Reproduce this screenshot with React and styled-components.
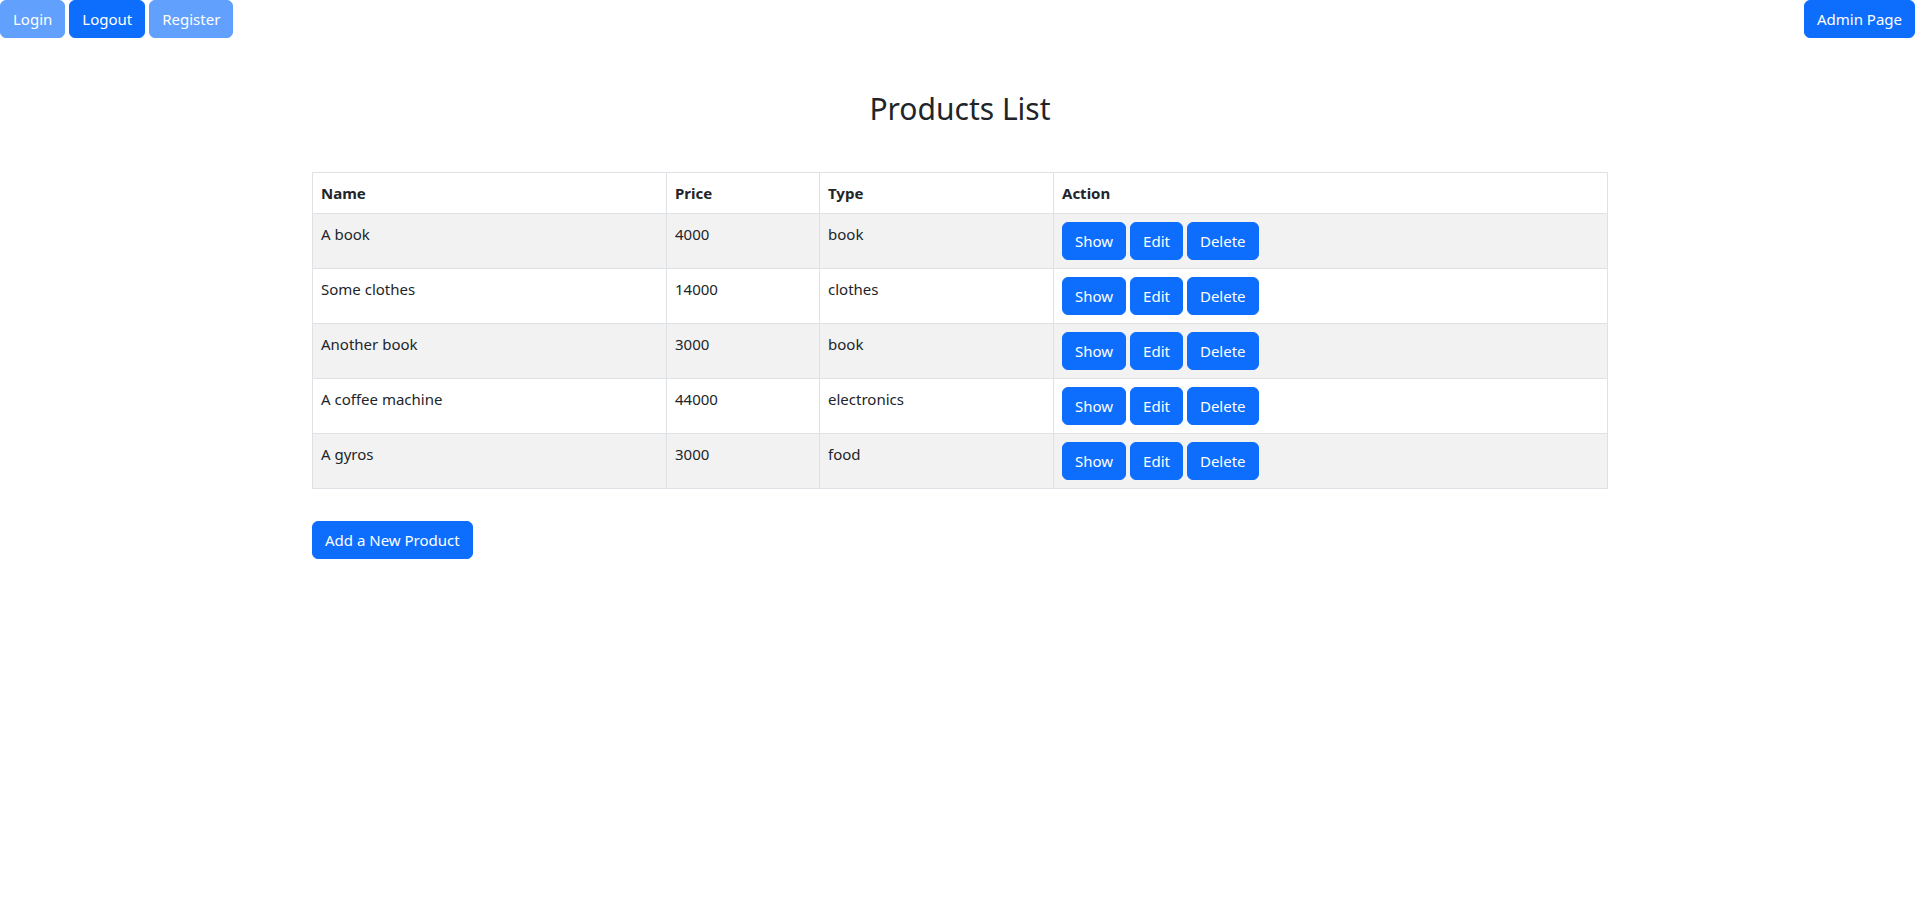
import styled, { createGlobalStyle } from "styled-components";

const GlobalStyle = createGlobalStyle`
  *, *::before, *::after {
    box-sizing: border-box;
  }
  body {
    margin: 0;
    font-family: "Noto Sans", "Open Sans", sans-serif;
    font-size: 15px;
    line-height: 24px;
    color: #212529;
    background: #fff;
  }
`;

const products = [
  { name: "A book", price: 4000, type: "book" },
  { name: "Some clothes", price: 14000, type: "clothes" },
  { name: "Another book", price: 3000, type: "book" },
  { name: "A coffee machine", price: 44000, type: "electronics" },
  { name: "A gyros", price: 3000, type: "food" },
];

const NavBar = styled.nav`
  display: flex;
  justify-content: space-between;
  align-items: flex-start;
  padding-right: 5px;
`;

const NavGroup = styled.div`
  display: flex;
  gap: 4px;
`;

const Btn = styled.button`
  display: inline-block;
  padding: 6px 12px;
  font-family: inherit;
  font-size: 15px;
  line-height: 24px;
  color: #fff;
  background: #0d6efd;
  border: 1px solid #0d6efd;
  border-radius: 6px;
  cursor: pointer;
  opacity: ${(p) => (p.disabled ? 0.65 : 1)};
  white-space: nowrap;
`;

const Container = styled.main`
  max-width: 1320px;
  margin: 0 auto;
  padding: 0 12px;
`;

const Title = styled.h2`
  margin: 53px 0 45px;
  text-align: center;
  font-size: 30px;
  font-weight: 400;
  line-height: 36px;
`;

const Table = styled.table`
  width: 100%;
  border-collapse: collapse;
  table-layout: fixed;
  margin-bottom: 32px;
  border: 1px solid #dee2e6;
`;

const Th = styled.th`
  width: ${(p) => p.$width || "auto"};
  padding: 8px;
  text-align: left;
  font-weight: 700;
  border: 1px solid #dee2e6;
  vertical-align: bottom;
`;

const Row = styled.tr`
  background: ${(p) => (p.$striped ? "#f2f2f2" : "#fff")};
`;

const Td = styled.td`
  padding: 8px;
  border: 1px solid #dee2e6;
  vertical-align: top;
`;

const Actions = styled.div`
  display: flex;
  gap: 4px;
`;

export default function App() {
  return (
    <>
      <GlobalStyle />
      <NavBar>
        <NavGroup>
          <Btn disabled>Login</Btn>
          <Btn>Logout</Btn>
          <Btn disabled>Register</Btn>
        </NavGroup>
        <Btn>Admin Page</Btn>
      </NavBar>
      <Container>
        <Title>Products List</Title>
        <Table>
          <thead>
            <tr>
              <Th $width="354px">Name</Th>
              <Th $width="153px">Price</Th>
              <Th $width="234px">Type</Th>
              <Th>Action</Th>
            </tr>
          </thead>
          <tbody>
            {products.map((p, i) => (
              <Row key={p.name} $striped={i % 2 === 0}>
                <Td>{p.name}</Td>
                <Td>{p.price}</Td>
                <Td>{p.type}</Td>
                <Td>
                  <Actions>
                    <Btn>Show</Btn>
                    <Btn>Edit</Btn>
                    <Btn>Delete</Btn>
                  </Actions>
                </Td>
              </Row>
            ))}
          </tbody>
        </Table>
        <Btn>Add a New Product</Btn>
      </Container>
    </>
  );
}
